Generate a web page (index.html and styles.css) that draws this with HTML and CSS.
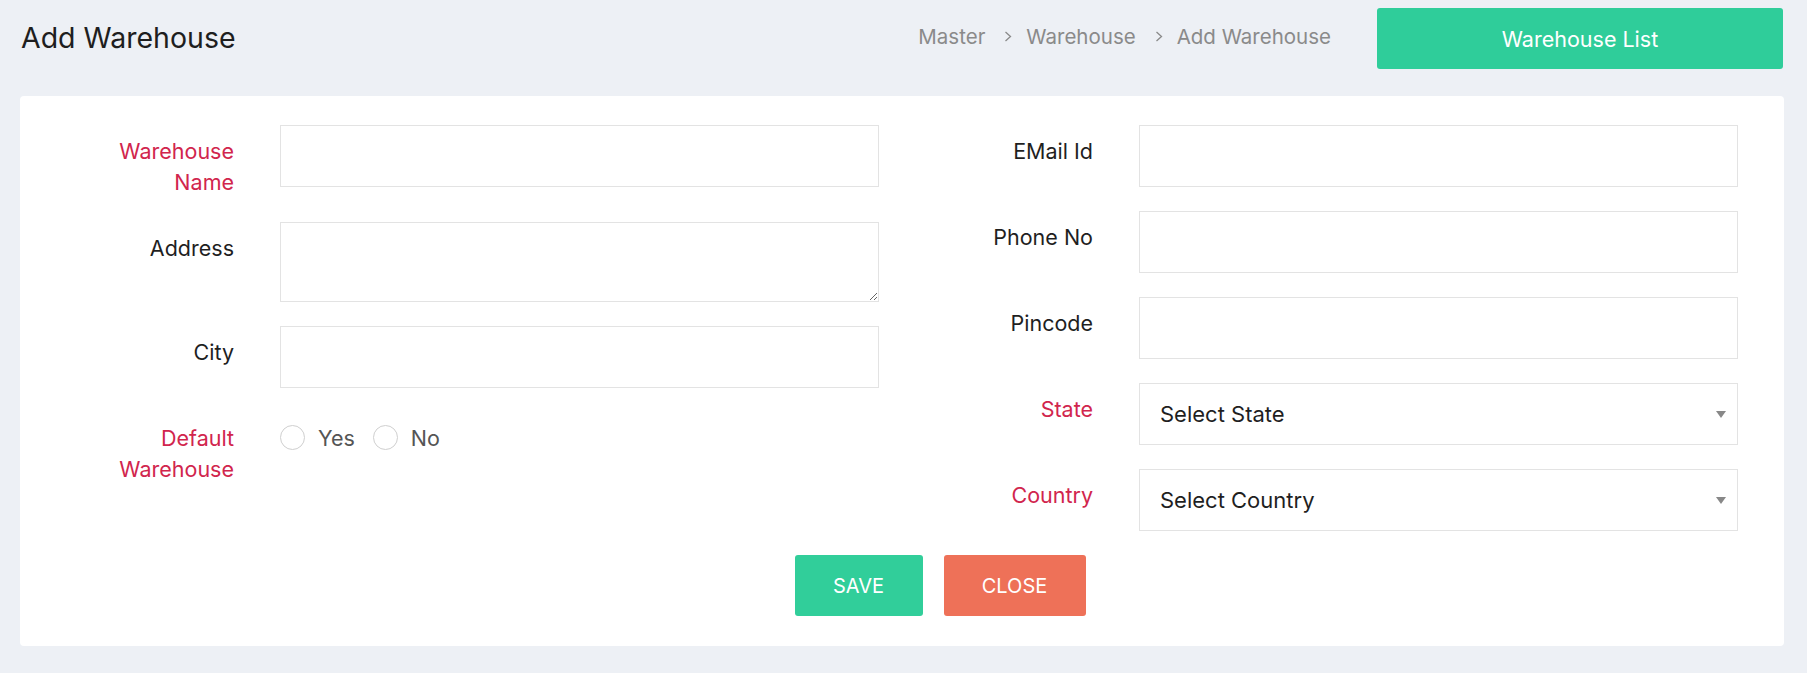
FILE: index.html
```html
<!DOCTYPE html>
<html lang="en">
<head>
    <meta charset="UTF-8">
    <meta name="viewport" content="width=device-width, initial-scale=1.0">
    <title>Add Warehouse</title>
    <link rel="stylesheet" href="styles.css">
</head>
<body>
    <div class="page-head">
        <h1 class="page-title">Add Warehouse</h1>
        <div class="head-right">
            <ul class="crumbs">
                <li>Master</li>
                <li class="sep"><svg width="8" height="11" viewBox="0 0 8 11"><path d="M1.5 1l5 4.5-5 4.5" fill="none" stroke="#8a8a8a" stroke-width="1.3"/></svg></li>
                <li>Warehouse</li>
                <li class="sep"><svg width="8" height="11" viewBox="0 0 8 11"><path d="M1.5 1l5 4.5-5 4.5" fill="none" stroke="#8a8a8a" stroke-width="1.3"/></svg></li>
                <li>Add Warehouse</li>
            </ul>
            <button class="btn btn-list">Warehouse List</button>
        </div>
    </div>

    <div class="card">
        <form class="form-cols">
            <div class="col">
                <div class="field">
                    <label class="req">Warehouse<br>Name</label>
                    <input type="text" class="ctrl">
                </div>
                <div class="field">
                    <label>Address</label>
                    <textarea class="ctrl area"></textarea>
                </div>
                <div class="field">
                    <label>City</label>
                    <input type="text" class="ctrl">
                </div>
                <div class="field">
                    <label class="req">Default<br>Warehouse</label>
                    <div class="radios">
                        <label class="radio"><input type="radio" name="def"> Yes</label>
                        <label class="radio"><input type="radio" name="def"> No</label>
                    </div>
                </div>
            </div>
            <div class="col">
                <div class="field">
                    <label>EMail Id</label>
                    <input type="text" class="ctrl">
                </div>
                <div class="field">
                    <label>Phone No</label>
                    <input type="text" class="ctrl">
                </div>
                <div class="field">
                    <label>Pincode</label>
                    <input type="text" class="ctrl">
                </div>
                <div class="field">
                    <label class="req">State</label>
                    <div class="select-wrap">
                        <select class="ctrl">
                            <option>Select State</option>
                        </select>
                    </div>
                </div>
                <div class="field">
                    <label class="req">Country</label>
                    <div class="select-wrap">
                        <select class="ctrl">
                            <option>Select Country</option>
                        </select>
                    </div>
                </div>
            </div>
        </form>
        <div class="actions">
            <button class="btn btn-save">SAVE</button>
            <button class="btn btn-close">CLOSE</button>
        </div>
    </div>
</body>
</html>
```

FILE: styles.css
```css
body {
    margin: 0;
    background: #edf0f5;
    font-family: "Inter", "Noto Sans", sans-serif;
    color: #1f1f1f;
}
.page-head {
    display: flex;
    align-items: center;
    justify-content: space-between;
    padding: 8px 24px 0 21px;
    margin-bottom: 27px;
}
.page-title {
    margin: 0 0 2px;
    font-size: 28.5px;
    font-weight: 400;
    color: #1e1e1e;
}
.head-right {
    display: flex;
    align-items: center;
}
.crumbs {
    display: flex;
    align-items: center;
    list-style: none;
    margin: 0 46px 4px 0;
    padding: 0;
    font-size: 20.5px;
    color: #8a8a8a;
}
.crumbs .sep {
    display: flex;
    padding: 0 14px 0 19px;
}
.btn {
    border: none;
    border-radius: 3px;
    color: #fff;
    font-family: inherit;
    height: 61px;
    cursor: pointer;
}
.btn-list {
    width: 406px;
    background: #2fcd9a;
    font-size: 21.5px;
}
.card {
    background: #fff;
    border-radius: 4px;
    margin: 0 23px 0 20px;
    padding: 29px 20px 30px;
}
.form-cols {
    display: grid;
    grid-template-columns: 859px 859px;
}
.field {
    display: grid;
    grid-template-columns: 194px 1fr;
    column-gap: 46px;
    padding-right: 20px;
    margin-bottom: 24px;
}
.field > label {
    text-align: right;
    font-size: 21.5px;
    line-height: 31px;
    padding-top: 11px;
    color: #1f1f1f;
}
.field > label.req {
    color: #d1254d;
}
.ctrl {
    box-sizing: border-box;
    width: 100%;
    height: 62px;
    border: 1px solid #e3e3e3;
    border-radius: 0;
    background: #fff;
    font-family: inherit;
    font-size: 22px;
    color: #1f1f1f;
    padding: 0 20px;
    outline: none;
}
.area {
    height: 80px;
    padding: 10px 20px;
}
.select-wrap {
    position: relative;
}
.select-wrap select {
    appearance: none;
    -webkit-appearance: none;
}
.select-wrap::after {
    content: "";
    position: absolute;
    right: 12px;
    top: 28px;
    border-left: 5px solid transparent;
    border-right: 5px solid transparent;
    border-top: 7px solid #888;
    pointer-events: none;
}
.radios {
    display: flex;
    align-items: center;
    gap: 18px;
    height: 31px;
    margin-top: 10px;
}
.radio {
    display: flex;
    align-items: center;
    gap: 13px;
    font-size: 21.5px;
    color: #555;
}
.radio input {
    appearance: none;
    -webkit-appearance: none;
    width: 25px;
    height: 25px;
    margin: 0;
    border: 1px solid #cfcfcf;
    border-radius: 50%;
    background: #fff;
}
.actions {
    display: flex;
    justify-content: center;
    gap: 21px;
    padding-left: 76px;
}
.btn-save {
    width: 128px;
    background: #31ce9a;
    font-size: 20px;
}
.btn-close {
    width: 142px;
    background: #ee7158;
    font-size: 20px;
}
```
